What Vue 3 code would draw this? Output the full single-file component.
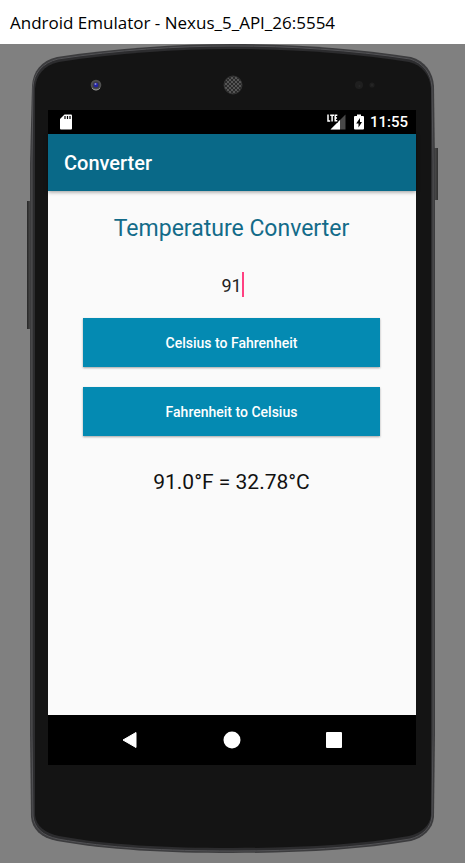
<script setup>
import { ref } from 'vue'

const degrees = ref('91')
const result = ref('91.0°F = 32.78°C')

function convert(from, to, formula) {
  const value = parseFloat(degrees.value)
  if (Number.isNaN(value)) return
  result.value = `${value.toFixed(1)}°${from} = ${formula(value).toFixed(2)}°${to}`
}

const toFahrenheit = () => convert('C', 'F', (c) => (c * 9) / 5 + 32)
const toCelsius = () => convert('F', 'C', (f) => ((f - 32) * 5) / 9)
</script>

<template>
  <div class="window">
    <header class="titlebar">Android Emulator - Nexus_5_API_26:5554</header>
    <div class="phone">
      <svg class="shell" viewBox="0 0 411 810" preserveAspectRatio="none" aria-hidden="true">
        <defs>
          <linearGradient id="rocker" x1="0" x2="1" y1="0" y2="0">
            <stop offset="0" stop-color="#262626" />
            <stop offset="0.5" stop-color="#484848" />
            <stop offset="1" stop-color="#303030" />
          </linearGradient>
        </defs>
        <rect x="0" y="157" width="6" height="128" fill="url(#rocker)" />
        <rect x="405" y="104" width="6" height="52" fill="url(#rocker)" />
        <path
          d="M3 120 L5 42 C6 27 14 17 30 13 C90 4 150 0 205 0 C262 0 325 4 384 13 C398 17 406 28 407 42 L408 120 V690 L407 773 C406 785 396 794 384 797 C330 806 270 809 205 809 C140 809 80 806 30 797 C14 794 5 785 4 773 L3 690 Z"
          fill="#3c3c3e"
        />
        <path
          d="M5 120 L6 43 C7 29 15 19 31 15 C90 6 150 2 205 2 C262 2 325 6 383 15 C396 19 404 29 405 43 L406 120 V690 L405 772 C404 784 395 792 383 795 C330 804 270 807 205 807 C140 807 80 804 31 795 C16 792 7 784 6 772 L5 690 Z"
          fill="#2c2c2e"
          stroke="#525255"
          stroke-width="1"
        />
        <path
          d="M8 120 V45 C9 31 17 21 32 18 C90 9 150 5 205 5 C262 5 325 9 382 18 C395 21 403 31 404 45 V771 C403 782 394 789 382 792 C330 801 270 804 205 804 C140 804 80 801 32 792 C18 789 9 782 8 771 Z"
          fill="#141414"
        />
      </svg>

      <div class="forehead">
        <svg class="camera" viewBox="0 0 12 12" aria-hidden="true">
          <circle cx="6" cy="6" r="5.3" fill="#505050" />
          <path d="M2 9 A5 5 0 0 0 10 9" stroke="#969696" fill="none" />
          <circle cx="6" cy="6" r="3.6" fill="#3a3a48" />
          <circle cx="6" cy="6" r="2.2" fill="#2121a8" />
          <circle cx="5.5" cy="5" r="1" fill="#8f8fcc" />
        </svg>
        <svg class="speaker" viewBox="0 0 20 20" aria-hidden="true">
          <defs>
            <pattern id="mesh" width="4" height="4" patternUnits="userSpaceOnUse">
              <rect width="4" height="4" fill="#555" />
              <circle cx="1" cy="1" r="0.9" fill="#161616" />
              <circle cx="3" cy="3" r="0.9" fill="#161616" />
            </pattern>
          </defs>
          <circle cx="10" cy="10" r="9" fill="url(#mesh)" stroke="#333" />
        </svg>
        <svg class="sensors" viewBox="0 0 22 10" aria-hidden="true">
          <circle cx="5" cy="5" r="4" fill="#1f1f1f" />
          <circle cx="18" cy="5" r="2.6" fill="#1f1f1f" />
          <circle cx="5.5" cy="6" r="1" fill="#292929" />
          <circle cx="18" cy="5" r="1" fill="#292929" />
        </svg>
      </div>

      <main class="screen">
        <div class="status">
          <svg class="card-icon" viewBox="0 0 12 16" aria-hidden="true">
            <path d="M4.5 0.5 H11 Q12 0.5 12 1.5 V14.5 Q12 15.5 11 15.5 H1 Q0 15.5 0 14.5 V5 Z" fill="#fff" />
            <path d="M5 2 V5 M7.5 2 V5 M10 2 V5" stroke="#000" stroke-width="1.2" />
          </svg>
          <svg class="signal-icon" viewBox="0 0 19 16" aria-hidden="true">
            <path d="M18.5 0.5 V15.5 H3.5 Z" fill="#494949" />
            <path d="M13 6 V15.5 H3.5 Z" fill="#fff" />
            <path d="M0 0 H11 V8.5 H0 Z" fill="#000" />
            <path d="M1 0.5 V7 H3.2 M3.2 1.2 H7 M5.1 1.2 V7.5 M10.3 1.2 H8.2 V6.8 H10.3 M8.2 4 H10" fill="none" stroke="#fff" stroke-width="1.5" />
          </svg>
          <svg class="battery-icon" viewBox="0 0 10 16" aria-hidden="true">
            <path d="M3 0.5 H7 V2 H9 Q10 2 10 3 V14.5 Q10 15.5 9 15.5 H1 Q0 15.5 0 14.5 V3 Q0 2 1 2 H3 Z" fill="#fff" />
            <path d="M6 4 L2.2 9.5 H4.5 V13.5 L8 8 H6 Z" fill="#000" />
          </svg>
          <time class="clock">11:55</time>
        </div>

        <div class="appbar">Converter</div>

        <section class="content">
          <h1 class="heading">Temperature Converter</h1>
          <div class="field">
            <input v-model="degrees" class="entry" type="text" inputmode="decimal" aria-label="Temperature" />
            <span class="caret"></span>
          </div>
          <div class="actions">
            <button type="button" class="action" @click="toFahrenheit">Celsius to Fahrenheit</button>
            <button type="button" class="action" @click="toCelsius">Fahrenheit to Celsius</button>
          </div>
          <output class="result">{{ result }}</output>
        </section>

        <nav class="navbar">
          <button type="button" class="key" aria-label="Back">
            <svg viewBox="0 0 18 18"><path d="M2 9 L15 1.5 V16.5 Z" fill="#fff" stroke="#fff" stroke-linejoin="round" /></svg>
          </button>
          <button type="button" class="key" aria-label="Home">
            <svg viewBox="0 0 18 18"><circle cx="9" cy="9" r="8.5" fill="#fff" /></svg>
          </button>
          <button type="button" class="key" aria-label="Overview">
            <svg viewBox="0 0 18 18"><rect x="1" y="1" width="16" height="16" rx="1" fill="#fff" /></svg>
          </button>
        </nav>
      </main>
    </div>
  </div>
</template>

<style>
body {
  background: #808080;
}
</style>

<style scoped>
.window {
  display: flex;
  flex-direction: column;
  min-height: 100vh;
  box-sizing: border-box;
  padding-bottom: 9px;
  background: #808080;
  font-family: Roboto, "Liberation Sans", sans-serif;
}

.titlebar {
  box-sizing: border-box;
  height: 44px;
  padding: 0 10px;
  background: #fff;
  color: #000;
  font-family: "Open Sans", "Noto Sans", sans-serif;
  font-size: 17px;
  line-height: 46px;
  white-space: nowrap;
}

.phone {
  position: relative;
  display: flex;
  flex: 1;
  flex-direction: column;
  margin: 0 27px;
  padding: 0 22px 89px 21px;
}

.shell {
  position: absolute;
  inset: 0;
  width: 100%;
  height: 100%;
}

.forehead {
  position: relative;
  display: grid;
  grid-template-columns: 1fr auto 1fr;
  align-items: center;
  height: 66px;
  padding: 16px 40px 0 42px;
  box-sizing: border-box;
}

.camera {
  width: 12px;
  height: 12px;
}

.speaker {
  width: 20px;
  height: 20px;
}

.sensors {
  justify-self: end;
  width: 22px;
  height: 10px;
}

.screen {
  position: relative;
  display: flex;
  flex: 1;
  flex-direction: column;
  background: #fafafa;
}

.status {
  display: flex;
  align-items: center;
  height: 24px;
  padding: 0 8px 0 12px;
  background: #000;
  color: #fff;
}

.card-icon {
  width: 12px;
  height: 16px;
  margin-right: auto;
}

.signal-icon {
  width: 19px;
  height: 16px;
}

.battery-icon {
  width: 10px;
  height: 16px;
  margin: 0 6px 0 8px;
}

.clock {
  font-size: 15px;
  font-weight: 500;
  line-height: 24px;
}

.appbar {
  height: 57px;
  padding: 0 16px;
  background: #096988;
  box-shadow: 0 1px 4px rgba(0, 0, 0, 0.4);
  color: #fff;
  font-size: 20px;
  font-weight: 500;
  line-height: 58px;
}

.content {
  display: flex;
  flex: 1;
  flex-direction: column;
  padding: 22px 36px 20px 35px;
  text-align: center;
}

.heading {
  margin: 0;
  color: #136b89;
  font-size: 23px;
  font-weight: 400;
  line-height: 32px;
}

.field {
  position: relative;
  margin-top: 25px;
}

.entry {
  display: block;
  width: 100%;
  height: 32px;
  padding: 0;
  border: 0;
  outline: 0;
  background: transparent;
  color: #222;
  caret-color: #ff4081;
  font: 400 18px/32px Roboto, "Liberation Sans", sans-serif;
  text-align: center;
}

.caret {
  position: absolute;
  top: 2px;
  left: 50%;
  width: 2px;
  height: 25px;
  margin-left: 10px;
  background: #ff4081;
}

.actions {
  display: grid;
  gap: 20px;
  margin-top: 16px;
}

.action {
  height: 49px;
  padding: 0;
  border: 0;
  background: #048ab2;
  box-shadow: 0 1px 2px rgba(0, 0, 0, 0.35);
  color: #fff;
  font: 500 14px/20px Roboto, "Liberation Sans", sans-serif;
}

.result {
  margin-top: 30px;
  color: #111;
  font-size: 21px;
  line-height: 32px;
}

.navbar {
  display: flex;
  align-items: center;
  justify-content: center;
  gap: 66px;
  height: 50px;
  background: #000;
}

.key {
  display: flex;
  justify-content: center;
  width: 36px;
  padding: 8px 0;
  border: 0;
  background: transparent;
}

.key svg {
  width: 18px;
  height: 18px;
}
</style>
